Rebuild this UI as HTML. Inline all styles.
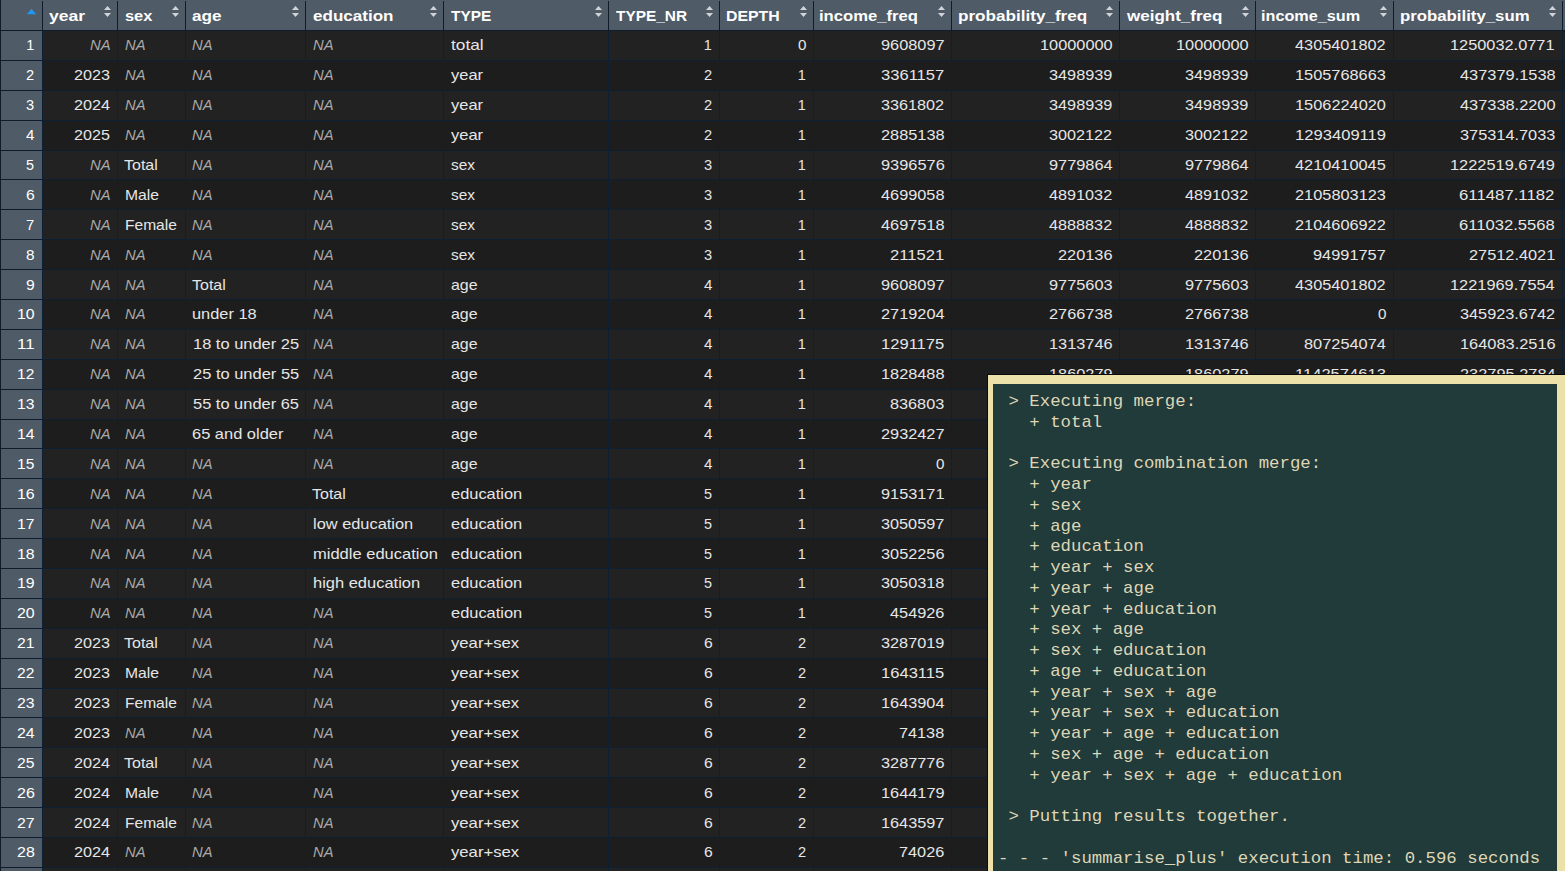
<!DOCTYPE html>
<html><head><meta charset="utf-8"><style>
html,body{margin:0;padding:0;}
body{width:1565px;height:871px;overflow:hidden;position:relative;background:#1d1d1d;font-family:"Liberation Sans",sans-serif;}
div,svg,span.t{position:absolute;}
span.t{transform-origin:0 50%;font-size:14.5px;line-height:20px;height:20px;white-space:pre;}
#ov{left:987px;top:374px;width:578px;height:497px;background:#0b0b0e;}
#fr{left:988px;top:375px;width:577px;height:496px;background:#ebe1a9;}
#in{left:993px;top:384px;width:564px;height:487px;background:#213a3a;}
#con{position:absolute;left:998px;top:392px;margin:0;font-family:"Liberation Mono",monospace;font-size:17.39px;line-height:20.75px;color:#ded6b6;white-space:pre;}
</style></head><body>
<div style="left:0px;top:0px;width:1565px;height:30px;background:#4f5b66;"></div><div style="left:0px;top:30px;width:1565px;height:1px;background:#0e1c2b;"></div><div style="left:0px;top:31px;width:42px;height:29px;background:#4f5b66;"></div><div style="left:43px;top:31px;width:1522px;height:29px;background:#222222;"></div><div style="left:0px;top:60px;width:42px;height:1px;background:#0e1c2b;"></div><div style="left:42px;top:60px;width:1523px;height:1px;background:#0c1f33;"></div><div style="left:0px;top:61px;width:42px;height:29px;background:#4f5b66;"></div><div style="left:43px;top:61px;width:1522px;height:29px;background:#1d1d1d;"></div><div style="left:0px;top:90px;width:42px;height:1px;background:#0e1c2b;"></div><div style="left:42px;top:90px;width:1523px;height:1px;background:#0c1f33;"></div><div style="left:0px;top:91px;width:42px;height:29px;background:#4f5b66;"></div><div style="left:43px;top:91px;width:1522px;height:29px;background:#222222;"></div><div style="left:0px;top:120px;width:42px;height:1px;background:#0e1c2b;"></div><div style="left:42px;top:120px;width:1523px;height:1px;background:#0c1f33;"></div><div style="left:0px;top:121px;width:42px;height:29px;background:#4f5b66;"></div><div style="left:43px;top:121px;width:1522px;height:29px;background:#1d1d1d;"></div><div style="left:0px;top:150px;width:42px;height:1px;background:#0e1c2b;"></div><div style="left:42px;top:150px;width:1523px;height:1px;background:#0c1f33;"></div><div style="left:0px;top:151px;width:42px;height:28px;background:#4f5b66;"></div><div style="left:43px;top:151px;width:1522px;height:28px;background:#222222;"></div><div style="left:0px;top:179px;width:42px;height:1px;background:#0e1c2b;"></div><div style="left:42px;top:179px;width:1523px;height:1px;background:#0c1f33;"></div><div style="left:0px;top:180px;width:42px;height:29px;background:#4f5b66;"></div><div style="left:43px;top:180px;width:1522px;height:29px;background:#1d1d1d;"></div><div style="left:0px;top:209px;width:42px;height:1px;background:#0e1c2b;"></div><div style="left:42px;top:209px;width:1523px;height:1px;background:#0c1f33;"></div><div style="left:0px;top:210px;width:42px;height:29px;background:#4f5b66;"></div><div style="left:43px;top:210px;width:1522px;height:29px;background:#222222;"></div><div style="left:0px;top:239px;width:42px;height:1px;background:#0e1c2b;"></div><div style="left:42px;top:239px;width:1523px;height:1px;background:#0c1f33;"></div><div style="left:0px;top:240px;width:42px;height:29px;background:#4f5b66;"></div><div style="left:43px;top:240px;width:1522px;height:29px;background:#1d1d1d;"></div><div style="left:0px;top:269px;width:42px;height:1px;background:#0e1c2b;"></div><div style="left:42px;top:269px;width:1523px;height:1px;background:#0c1f33;"></div><div style="left:0px;top:270px;width:42px;height:29px;background:#4f5b66;"></div><div style="left:43px;top:270px;width:1522px;height:29px;background:#222222;"></div><div style="left:0px;top:299px;width:42px;height:1px;background:#0e1c2b;"></div><div style="left:42px;top:299px;width:1523px;height:1px;background:#0c1f33;"></div><div style="left:0px;top:300px;width:42px;height:29px;background:#4f5b66;"></div><div style="left:43px;top:300px;width:1522px;height:29px;background:#1d1d1d;"></div><div style="left:0px;top:329px;width:42px;height:1px;background:#0e1c2b;"></div><div style="left:42px;top:329px;width:1523px;height:1px;background:#0c1f33;"></div><div style="left:0px;top:330px;width:42px;height:29px;background:#4f5b66;"></div><div style="left:43px;top:330px;width:1522px;height:29px;background:#222222;"></div><div style="left:0px;top:359px;width:42px;height:1px;background:#0e1c2b;"></div><div style="left:42px;top:359px;width:1523px;height:1px;background:#0c1f33;"></div><div style="left:0px;top:360px;width:42px;height:29px;background:#4f5b66;"></div><div style="left:43px;top:360px;width:1522px;height:29px;background:#1d1d1d;"></div><div style="left:0px;top:389px;width:42px;height:1px;background:#0e1c2b;"></div><div style="left:42px;top:389px;width:1523px;height:1px;background:#0c1f33;"></div><div style="left:0px;top:390px;width:42px;height:29px;background:#4f5b66;"></div><div style="left:43px;top:390px;width:1522px;height:29px;background:#222222;"></div><div style="left:0px;top:419px;width:42px;height:1px;background:#0e1c2b;"></div><div style="left:42px;top:419px;width:1523px;height:1px;background:#0c1f33;"></div><div style="left:0px;top:420px;width:42px;height:28px;background:#4f5b66;"></div><div style="left:43px;top:420px;width:1522px;height:28px;background:#1d1d1d;"></div><div style="left:0px;top:448px;width:42px;height:1px;background:#0e1c2b;"></div><div style="left:42px;top:448px;width:1523px;height:1px;background:#0c1f33;"></div><div style="left:0px;top:449px;width:42px;height:29px;background:#4f5b66;"></div><div style="left:43px;top:449px;width:1522px;height:29px;background:#222222;"></div><div style="left:0px;top:478px;width:42px;height:1px;background:#0e1c2b;"></div><div style="left:42px;top:478px;width:1523px;height:1px;background:#0c1f33;"></div><div style="left:0px;top:479px;width:42px;height:29px;background:#4f5b66;"></div><div style="left:43px;top:479px;width:1522px;height:29px;background:#1d1d1d;"></div><div style="left:0px;top:508px;width:42px;height:1px;background:#0e1c2b;"></div><div style="left:42px;top:508px;width:1523px;height:1px;background:#0c1f33;"></div><div style="left:0px;top:509px;width:42px;height:29px;background:#4f5b66;"></div><div style="left:43px;top:509px;width:1522px;height:29px;background:#222222;"></div><div style="left:0px;top:538px;width:42px;height:1px;background:#0e1c2b;"></div><div style="left:42px;top:538px;width:1523px;height:1px;background:#0c1f33;"></div><div style="left:0px;top:539px;width:42px;height:29px;background:#4f5b66;"></div><div style="left:43px;top:539px;width:1522px;height:29px;background:#1d1d1d;"></div><div style="left:0px;top:568px;width:42px;height:1px;background:#0e1c2b;"></div><div style="left:42px;top:568px;width:1523px;height:1px;background:#0c1f33;"></div><div style="left:0px;top:569px;width:42px;height:29px;background:#4f5b66;"></div><div style="left:43px;top:569px;width:1522px;height:29px;background:#222222;"></div><div style="left:0px;top:598px;width:42px;height:1px;background:#0e1c2b;"></div><div style="left:42px;top:598px;width:1523px;height:1px;background:#0c1f33;"></div><div style="left:0px;top:599px;width:42px;height:29px;background:#4f5b66;"></div><div style="left:43px;top:599px;width:1522px;height:29px;background:#1d1d1d;"></div><div style="left:0px;top:628px;width:42px;height:1px;background:#0e1c2b;"></div><div style="left:42px;top:628px;width:1523px;height:1px;background:#0c1f33;"></div><div style="left:0px;top:629px;width:42px;height:29px;background:#4f5b66;"></div><div style="left:43px;top:629px;width:1522px;height:29px;background:#222222;"></div><div style="left:0px;top:658px;width:42px;height:1px;background:#0e1c2b;"></div><div style="left:42px;top:658px;width:1523px;height:1px;background:#0c1f33;"></div><div style="left:0px;top:659px;width:42px;height:29px;background:#4f5b66;"></div><div style="left:43px;top:659px;width:1522px;height:29px;background:#1d1d1d;"></div><div style="left:0px;top:688px;width:42px;height:1px;background:#0e1c2b;"></div><div style="left:42px;top:688px;width:1523px;height:1px;background:#0c1f33;"></div><div style="left:0px;top:689px;width:42px;height:28px;background:#4f5b66;"></div><div style="left:43px;top:689px;width:1522px;height:28px;background:#222222;"></div><div style="left:0px;top:717px;width:42px;height:1px;background:#0e1c2b;"></div><div style="left:42px;top:717px;width:1523px;height:1px;background:#0c1f33;"></div><div style="left:0px;top:718px;width:42px;height:29px;background:#4f5b66;"></div><div style="left:43px;top:718px;width:1522px;height:29px;background:#1d1d1d;"></div><div style="left:0px;top:747px;width:42px;height:1px;background:#0e1c2b;"></div><div style="left:42px;top:747px;width:1523px;height:1px;background:#0c1f33;"></div><div style="left:0px;top:748px;width:42px;height:29px;background:#4f5b66;"></div><div style="left:43px;top:748px;width:1522px;height:29px;background:#222222;"></div><div style="left:0px;top:777px;width:42px;height:1px;background:#0e1c2b;"></div><div style="left:42px;top:777px;width:1523px;height:1px;background:#0c1f33;"></div><div style="left:0px;top:778px;width:42px;height:29px;background:#4f5b66;"></div><div style="left:43px;top:778px;width:1522px;height:29px;background:#1d1d1d;"></div><div style="left:0px;top:807px;width:42px;height:1px;background:#0e1c2b;"></div><div style="left:42px;top:807px;width:1523px;height:1px;background:#0c1f33;"></div><div style="left:0px;top:808px;width:42px;height:29px;background:#4f5b66;"></div><div style="left:43px;top:808px;width:1522px;height:29px;background:#222222;"></div><div style="left:0px;top:837px;width:42px;height:1px;background:#0e1c2b;"></div><div style="left:42px;top:837px;width:1523px;height:1px;background:#0c1f33;"></div><div style="left:0px;top:838px;width:42px;height:29px;background:#4f5b66;"></div><div style="left:43px;top:838px;width:1522px;height:29px;background:#1d1d1d;"></div><div style="left:0px;top:867px;width:42px;height:1px;background:#0e1c2b;"></div><div style="left:42px;top:867px;width:1523px;height:1px;background:#0c1f33;"></div><div style="left:0px;top:868px;width:42px;height:29px;background:#4f5b66;"></div><div style="left:43px;top:868px;width:1522px;height:29px;background:#222222;"></div><div style="left:0px;top:897px;width:42px;height:1px;background:#0e1c2b;"></div><div style="left:42px;top:897px;width:1523px;height:1px;background:#0c1f33;"></div><div style="left:0px;top:0px;width:1px;height:871px;background:#0e1c2b;"></div><div style="left:42px;top:1px;width:1px;height:29px;background:#0e1c2b;"></div><div style="left:42px;top:31px;width:1px;height:840px;background:#0c1f33;"></div><div style="left:117px;top:1px;width:1px;height:29px;background:#0e1c2b;"></div><div style="left:117px;top:31px;width:1px;height:840px;background:#0c1f33;"></div><div style="left:185px;top:1px;width:1px;height:29px;background:#0e1c2b;"></div><div style="left:185px;top:31px;width:1px;height:840px;background:#0c1f33;"></div><div style="left:305px;top:1px;width:1px;height:29px;background:#0e1c2b;"></div><div style="left:305px;top:31px;width:1px;height:840px;background:#0c1f33;"></div><div style="left:443px;top:1px;width:1px;height:29px;background:#0e1c2b;"></div><div style="left:443px;top:31px;width:1px;height:840px;background:#0c1f33;"></div><div style="left:608px;top:1px;width:1px;height:29px;background:#0e1c2b;"></div><div style="left:608px;top:31px;width:1px;height:840px;background:#0c1f33;"></div><div style="left:719px;top:1px;width:1px;height:29px;background:#0e1c2b;"></div><div style="left:719px;top:31px;width:1px;height:840px;background:#0c1f33;"></div><div style="left:813px;top:1px;width:1px;height:29px;background:#0e1c2b;"></div><div style="left:813px;top:31px;width:1px;height:840px;background:#0c1f33;"></div><div style="left:951px;top:1px;width:1px;height:29px;background:#0e1c2b;"></div><div style="left:951px;top:31px;width:1px;height:840px;background:#0c1f33;"></div><div style="left:1119px;top:1px;width:1px;height:29px;background:#0e1c2b;"></div><div style="left:1119px;top:31px;width:1px;height:840px;background:#0c1f33;"></div><div style="left:1255px;top:1px;width:1px;height:29px;background:#0e1c2b;"></div><div style="left:1255px;top:31px;width:1px;height:840px;background:#0c1f33;"></div><div style="left:1393px;top:1px;width:1px;height:29px;background:#0e1c2b;"></div><div style="left:1393px;top:31px;width:1px;height:840px;background:#0c1f33;"></div><div style="left:1562px;top:1px;width:1px;height:29px;background:#0e1c2b;"></div><div style="left:1562px;top:31px;width:1px;height:840px;background:#0c1f33;"></div><span class="t" style="left:49.03px;top:6px;transform:scaleX(1.2123);color:#ffffff;font-weight:bold;font-style:normal">year</span><svg class="a" style="left:104px;top:5px" width="8" height="13" viewBox="0 0 8 13"><path d="M0 5 L3.5 1 L7 5Z M0 8 L7 8 L3.5 12Z" fill="#d0d4d8"/></svg><span class="t" style="left:124.97px;top:6px;transform:scaleX(1.1312);color:#ffffff;font-weight:bold;font-style:normal">sex</span><svg class="a" style="left:172px;top:5px" width="8" height="13" viewBox="0 0 8 13"><path d="M0 5 L3.5 1 L7 5Z M0 8 L7 8 L3.5 12Z" fill="#d0d4d8"/></svg><span class="t" style="left:192.42px;top:6px;transform:scaleX(1.1833);color:#ffffff;font-weight:bold;font-style:normal">age</span><svg class="a" style="left:292px;top:5px" width="8" height="13" viewBox="0 0 8 13"><path d="M0 5 L3.5 1 L7 5Z M0 8 L7 8 L3.5 12Z" fill="#d0d4d8"/></svg><span class="t" style="left:312.75px;top:6px;transform:scaleX(1.1757);color:#ffffff;font-weight:bold;font-style:normal">education</span><svg class="a" style="left:430px;top:5px" width="8" height="13" viewBox="0 0 8 13"><path d="M0 5 L3.5 1 L7 5Z M0 8 L7 8 L3.5 12Z" fill="#d0d4d8"/></svg><span class="t" style="left:451.00px;top:6px;transform:scaleX(1.0637);color:#ffffff;font-weight:bold;font-style:normal">TYPE</span><svg class="a" style="left:595px;top:5px" width="8" height="13" viewBox="0 0 8 13"><path d="M0 5 L3.5 1 L7 5Z M0 8 L7 8 L3.5 12Z" fill="#d0d4d8"/></svg><span class="t" style="left:616.20px;top:6px;transform:scaleX(1.0634);color:#ffffff;font-weight:bold;font-style:normal">TYPE_NR</span><svg class="a" style="left:706px;top:5px" width="8" height="13" viewBox="0 0 8 13"><path d="M0 5 L3.5 1 L7 5Z M0 8 L7 8 L3.5 12Z" fill="#d0d4d8"/></svg><span class="t" style="left:726.06px;top:6px;transform:scaleX(1.0926);color:#ffffff;font-weight:bold;font-style:normal">DEPTH</span><svg class="a" style="left:800px;top:5px" width="8" height="13" viewBox="0 0 8 13"><path d="M0 5 L3.5 1 L7 5Z M0 8 L7 8 L3.5 12Z" fill="#d0d4d8"/></svg><span class="t" style="left:819.35px;top:6px;transform:scaleX(1.1470);color:#ffffff;font-weight:bold;font-style:normal">income_freq</span><svg class="a" style="left:938px;top:5px" width="8" height="13" viewBox="0 0 8 13"><path d="M0 5 L3.5 1 L7 5Z M0 8 L7 8 L3.5 12Z" fill="#d0d4d8"/></svg><span class="t" style="left:957.88px;top:6px;transform:scaleX(1.1792);color:#ffffff;font-weight:bold;font-style:normal">probability_freq</span><svg class="a" style="left:1106px;top:5px" width="8" height="13" viewBox="0 0 8 13"><path d="M0 5 L3.5 1 L7 5Z M0 8 L7 8 L3.5 12Z" fill="#d0d4d8"/></svg><span class="t" style="left:1126.86px;top:6px;transform:scaleX(1.1732);color:#ffffff;font-weight:bold;font-style:normal">weight_freq</span><svg class="a" style="left:1242px;top:5px" width="8" height="13" viewBox="0 0 8 13"><path d="M0 5 L3.5 1 L7 5Z M0 8 L7 8 L3.5 12Z" fill="#d0d4d8"/></svg><span class="t" style="left:1261.37px;top:6px;transform:scaleX(1.1193);color:#ffffff;font-weight:bold;font-style:normal">income_sum</span><svg class="a" style="left:1380px;top:5px" width="8" height="13" viewBox="0 0 8 13"><path d="M0 5 L3.5 1 L7 5Z M0 8 L7 8 L3.5 12Z" fill="#d0d4d8"/></svg><span class="t" style="left:1400.30px;top:6px;transform:scaleX(1.1567);color:#ffffff;font-weight:bold;font-style:normal">probability_sum</span><svg class="a" style="left:1549px;top:5px" width="8" height="13" viewBox="0 0 8 13"><path d="M0 5 L3.5 1 L7 5Z M0 8 L7 8 L3.5 12Z" fill="#d0d4d8"/></svg><svg class="a" style="left:26px;top:8px" width="11" height="7" viewBox="0 0 11 7"><path d="M0.8 6.2 L5.5 0.8 L10.2 6.2Z" fill="#2196f3"/></svg><span class="t" style="left:26.32px;top:35px;transform:scaleX(1.0000);color:#ffffff;font-weight:normal;font-style:normal">1</span><span class="t" style="left:89.81px;top:35px;transform:scaleX(1.0175);color:#a9a9a9;font-weight:normal;font-style:italic">NA</span><span class="t" style="left:124.73px;top:35px;transform:scaleX(1.0175);color:#a9a9a9;font-weight:normal;font-style:italic">NA</span><span class="t" style="left:192.23px;top:35px;transform:scaleX(1.0175);color:#a9a9a9;font-weight:normal;font-style:italic">NA</span><span class="t" style="left:312.73px;top:35px;transform:scaleX(1.0175);color:#a9a9a9;font-weight:normal;font-style:italic">NA</span><span class="t" style="left:451.23px;top:35px;transform:scaleX(1.1897);color:#e6e6e6;font-weight:normal;font-style:normal">total</span><span class="t" style="left:703.82px;top:35px;transform:scaleX(1.0000);color:#e6e6e6;font-weight:normal;font-style:normal">1</span><span class="t" style="left:797.70px;top:35px;transform:scaleX(1.0471);color:#e6e6e6;font-weight:normal;font-style:normal">0</span><span class="t" style="left:880.51px;top:35px;transform:scaleX(1.1263);color:#e6e6e6;font-weight:normal;font-style:normal">9608097</span><span class="t" style="left:1039.55px;top:35px;transform:scaleX(1.1260);color:#e6e6e6;font-weight:normal;font-style:normal">10000000</span><span class="t" style="left:1175.55px;top:35px;transform:scaleX(1.1260);color:#e6e6e6;font-weight:normal;font-style:normal">10000000</span><span class="t" style="left:1295.21px;top:35px;transform:scaleX(1.1243);color:#e6e6e6;font-weight:normal;font-style:normal">4305401802</span><span class="t" style="left:1450.49px;top:35px;transform:scaleX(1.1268);color:#e6e6e6;font-weight:normal;font-style:normal">1250032.0771</span><span class="t" style="left:26.16px;top:65px;transform:scaleX(1.0083);color:#ffffff;font-weight:normal;font-style:normal">2</span><span class="t" style="left:74.10px;top:65px;transform:scaleX(1.1153);color:#e6e6e6;font-weight:normal;font-style:normal">2023</span><span class="t" style="left:124.73px;top:65px;transform:scaleX(1.0175);color:#a9a9a9;font-weight:normal;font-style:italic">NA</span><span class="t" style="left:192.23px;top:65px;transform:scaleX(1.0175);color:#a9a9a9;font-weight:normal;font-style:italic">NA</span><span class="t" style="left:312.73px;top:65px;transform:scaleX(1.0175);color:#a9a9a9;font-weight:normal;font-style:italic">NA</span><span class="t" style="left:451.48px;top:65px;transform:scaleX(1.1355);color:#e6e6e6;font-weight:normal;font-style:normal">year</span><span class="t" style="left:703.66px;top:65px;transform:scaleX(1.0083);color:#e6e6e6;font-weight:normal;font-style:normal">2</span><span class="t" style="left:797.82px;top:65px;transform:scaleX(1.0000);color:#e6e6e6;font-weight:normal;font-style:normal">1</span><span class="t" style="left:880.83px;top:65px;transform:scaleX(1.1424);color:#e6e6e6;font-weight:normal;font-style:normal">3361157</span><span class="t" style="left:1048.84px;top:65px;transform:scaleX(1.1232);color:#e6e6e6;font-weight:normal;font-style:normal">3498939</span><span class="t" style="left:1184.84px;top:65px;transform:scaleX(1.1232);color:#e6e6e6;font-weight:normal;font-style:normal">3498939</span><span class="t" style="left:1295.22px;top:65px;transform:scaleX(1.1265);color:#e6e6e6;font-weight:normal;font-style:normal">1505768663</span><span class="t" style="left:1459.63px;top:65px;transform:scaleX(1.1290);color:#e6e6e6;font-weight:normal;font-style:normal">437379.1538</span><span class="t" style="left:26.38px;top:95px;transform:scaleX(1.0057);color:#ffffff;font-weight:normal;font-style:normal">3</span><span class="t" style="left:74.09px;top:95px;transform:scaleX(1.1186);color:#e6e6e6;font-weight:normal;font-style:normal">2024</span><span class="t" style="left:124.73px;top:95px;transform:scaleX(1.0175);color:#a9a9a9;font-weight:normal;font-style:italic">NA</span><span class="t" style="left:192.23px;top:95px;transform:scaleX(1.0175);color:#a9a9a9;font-weight:normal;font-style:italic">NA</span><span class="t" style="left:312.73px;top:95px;transform:scaleX(1.0175);color:#a9a9a9;font-weight:normal;font-style:italic">NA</span><span class="t" style="left:451.48px;top:95px;transform:scaleX(1.1355);color:#e6e6e6;font-weight:normal;font-style:normal">year</span><span class="t" style="left:703.66px;top:95px;transform:scaleX(1.0083);color:#e6e6e6;font-weight:normal;font-style:normal">2</span><span class="t" style="left:797.82px;top:95px;transform:scaleX(1.0000);color:#e6e6e6;font-weight:normal;font-style:normal">1</span><span class="t" style="left:880.85px;top:95px;transform:scaleX(1.1163);color:#e6e6e6;font-weight:normal;font-style:normal">3361802</span><span class="t" style="left:1048.84px;top:95px;transform:scaleX(1.1232);color:#e6e6e6;font-weight:normal;font-style:normal">3498939</span><span class="t" style="left:1184.84px;top:95px;transform:scaleX(1.1232);color:#e6e6e6;font-weight:normal;font-style:normal">3498939</span><span class="t" style="left:1295.22px;top:95px;transform:scaleX(1.1280);color:#e6e6e6;font-weight:normal;font-style:normal">1506224020</span><span class="t" style="left:1459.63px;top:95px;transform:scaleX(1.1286);color:#e6e6e6;font-weight:normal;font-style:normal">437338.2200</span><span class="t" style="left:26.19px;top:125px;transform:scaleX(1.0463);color:#ffffff;font-weight:normal;font-style:normal">4</span><span class="t" style="left:74.10px;top:125px;transform:scaleX(1.1110);color:#e6e6e6;font-weight:normal;font-style:normal">2025</span><span class="t" style="left:124.73px;top:125px;transform:scaleX(1.0175);color:#a9a9a9;font-weight:normal;font-style:italic">NA</span><span class="t" style="left:192.23px;top:125px;transform:scaleX(1.0175);color:#a9a9a9;font-weight:normal;font-style:italic">NA</span><span class="t" style="left:312.73px;top:125px;transform:scaleX(1.0175);color:#a9a9a9;font-weight:normal;font-style:italic">NA</span><span class="t" style="left:451.48px;top:125px;transform:scaleX(1.1355);color:#e6e6e6;font-weight:normal;font-style:normal">year</span><span class="t" style="left:703.66px;top:125px;transform:scaleX(1.0083);color:#e6e6e6;font-weight:normal;font-style:normal">2</span><span class="t" style="left:797.82px;top:125px;transform:scaleX(1.0000);color:#e6e6e6;font-weight:normal;font-style:normal">1</span><span class="t" style="left:880.60px;top:125px;transform:scaleX(1.1269);color:#e6e6e6;font-weight:normal;font-style:normal">2885138</span><span class="t" style="left:1048.85px;top:125px;transform:scaleX(1.1163);color:#e6e6e6;font-weight:normal;font-style:normal">3002122</span><span class="t" style="left:1184.85px;top:125px;transform:scaleX(1.1163);color:#e6e6e6;font-weight:normal;font-style:normal">3002122</span><span class="t" style="left:1295.20px;top:125px;transform:scaleX(1.1445);color:#e6e6e6;font-weight:normal;font-style:normal">1293409119</span><span class="t" style="left:1459.78px;top:125px;transform:scaleX(1.1254);color:#e6e6e6;font-weight:normal;font-style:normal">375314.7033</span><span class="t" style="left:26.37px;top:155px;transform:scaleX(0.9889);color:#ffffff;font-weight:normal;font-style:normal">5</span><span class="t" style="left:89.81px;top:155px;transform:scaleX(1.0175);color:#a9a9a9;font-weight:normal;font-style:italic">NA</span><span class="t" style="left:124.41px;top:155px;transform:scaleX(1.1021);color:#e6e6e6;font-weight:normal;font-style:normal">Total</span><span class="t" style="left:192.23px;top:155px;transform:scaleX(1.0175);color:#a9a9a9;font-weight:normal;font-style:italic">NA</span><span class="t" style="left:312.73px;top:155px;transform:scaleX(1.0175);color:#a9a9a9;font-weight:normal;font-style:italic">NA</span><span class="t" style="left:451.45px;top:155px;transform:scaleX(1.0632);color:#e6e6e6;font-weight:normal;font-style:normal">sex</span><span class="t" style="left:703.88px;top:155px;transform:scaleX(1.0057);color:#e6e6e6;font-weight:normal;font-style:normal">3</span><span class="t" style="left:797.82px;top:155px;transform:scaleX(1.0000);color:#e6e6e6;font-weight:normal;font-style:normal">1</span><span class="t" style="left:880.50px;top:155px;transform:scaleX(1.1302);color:#e6e6e6;font-weight:normal;font-style:normal">9396576</span><span class="t" style="left:1048.51px;top:155px;transform:scaleX(1.1276);color:#e6e6e6;font-weight:normal;font-style:normal">9779864</span><span class="t" style="left:1184.51px;top:155px;transform:scaleX(1.1276);color:#e6e6e6;font-weight:normal;font-style:normal">9779864</span><span class="t" style="left:1295.21px;top:155px;transform:scaleX(1.1250);color:#e6e6e6;font-weight:normal;font-style:normal">4210410045</span><span class="t" style="left:1450.48px;top:155px;transform:scaleX(1.1299);color:#e6e6e6;font-weight:normal;font-style:normal">1222519.6749</span><span class="t" style="left:26.04px;top:185px;transform:scaleX(1.0836);color:#ffffff;font-weight:normal;font-style:normal">6</span><span class="t" style="left:89.81px;top:185px;transform:scaleX(1.0175);color:#a9a9a9;font-weight:normal;font-style:italic">NA</span><span class="t" style="left:124.93px;top:185px;transform:scaleX(1.0787);color:#e6e6e6;font-weight:normal;font-style:normal">Male</span><span class="t" style="left:192.23px;top:185px;transform:scaleX(1.0175);color:#a9a9a9;font-weight:normal;font-style:italic">NA</span><span class="t" style="left:312.73px;top:185px;transform:scaleX(1.0175);color:#a9a9a9;font-weight:normal;font-style:italic">NA</span><span class="t" style="left:451.45px;top:185px;transform:scaleX(1.0632);color:#e6e6e6;font-weight:normal;font-style:normal">sex</span><span class="t" style="left:703.88px;top:185px;transform:scaleX(1.0057);color:#e6e6e6;font-weight:normal;font-style:normal">3</span><span class="t" style="left:797.82px;top:185px;transform:scaleX(1.0000);color:#e6e6e6;font-weight:normal;font-style:normal">1</span><span class="t" style="left:880.70px;top:185px;transform:scaleX(1.1252);color:#e6e6e6;font-weight:normal;font-style:normal">4699058</span><span class="t" style="left:1048.70px;top:185px;transform:scaleX(1.1189);color:#e6e6e6;font-weight:normal;font-style:normal">4891032</span><span class="t" style="left:1184.70px;top:185px;transform:scaleX(1.1189);color:#e6e6e6;font-weight:normal;font-style:normal">4891032</span><span class="t" style="left:1295.12px;top:185px;transform:scaleX(1.1279);color:#e6e6e6;font-weight:normal;font-style:normal">2105803123</span><span class="t" style="left:1459.46px;top:185px;transform:scaleX(1.1565);color:#e6e6e6;font-weight:normal;font-style:normal">611487.1182</span><span class="t" style="left:26.26px;top:215px;transform:scaleX(1.0237);color:#ffffff;font-weight:normal;font-style:normal">7</span><span class="t" style="left:89.81px;top:215px;transform:scaleX(1.0175);color:#a9a9a9;font-weight:normal;font-style:italic">NA</span><span class="t" style="left:124.94px;top:215px;transform:scaleX(1.0727);color:#e6e6e6;font-weight:normal;font-style:normal">Female</span><span class="t" style="left:192.23px;top:215px;transform:scaleX(1.0175);color:#a9a9a9;font-weight:normal;font-style:italic">NA</span><span class="t" style="left:312.73px;top:215px;transform:scaleX(1.0175);color:#a9a9a9;font-weight:normal;font-style:italic">NA</span><span class="t" style="left:451.45px;top:215px;transform:scaleX(1.0632);color:#e6e6e6;font-weight:normal;font-style:normal">sex</span><span class="t" style="left:703.88px;top:215px;transform:scaleX(1.0057);color:#e6e6e6;font-weight:normal;font-style:normal">3</span><span class="t" style="left:797.82px;top:215px;transform:scaleX(1.0000);color:#e6e6e6;font-weight:normal;font-style:normal">1</span><span class="t" style="left:880.70px;top:215px;transform:scaleX(1.1252);color:#e6e6e6;font-weight:normal;font-style:normal">4697518</span><span class="t" style="left:1048.70px;top:215px;transform:scaleX(1.1189);color:#e6e6e6;font-weight:normal;font-style:normal">4888832</span><span class="t" style="left:1184.70px;top:215px;transform:scaleX(1.1189);color:#e6e6e6;font-weight:normal;font-style:normal">4888832</span><span class="t" style="left:1295.12px;top:215px;transform:scaleX(1.1255);color:#e6e6e6;font-weight:normal;font-style:normal">2104606922</span><span class="t" style="left:1459.47px;top:215px;transform:scaleX(1.1456);color:#e6e6e6;font-weight:normal;font-style:normal">611032.5568</span><span class="t" style="left:26.16px;top:245px;transform:scaleX(1.0565);color:#ffffff;font-weight:normal;font-style:normal">8</span><span class="t" style="left:89.81px;top:245px;transform:scaleX(1.0175);color:#a9a9a9;font-weight:normal;font-style:italic">NA</span><span class="t" style="left:124.73px;top:245px;transform:scaleX(1.0175);color:#a9a9a9;font-weight:normal;font-style:italic">NA</span><span class="t" style="left:192.23px;top:245px;transform:scaleX(1.0175);color:#a9a9a9;font-weight:normal;font-style:italic">NA</span><span class="t" style="left:312.73px;top:245px;transform:scaleX(1.0175);color:#a9a9a9;font-weight:normal;font-style:italic">NA</span><span class="t" style="left:451.45px;top:245px;transform:scaleX(1.0632);color:#e6e6e6;font-weight:normal;font-style:normal">sex</span><span class="t" style="left:703.88px;top:245px;transform:scaleX(1.0057);color:#e6e6e6;font-weight:normal;font-style:normal">3</span><span class="t" style="left:797.82px;top:245px;transform:scaleX(1.0000);color:#e6e6e6;font-weight:normal;font-style:normal">1</span><span class="t" style="left:889.75px;top:245px;transform:scaleX(1.1463);color:#e6e6e6;font-weight:normal;font-style:normal">211521</span><span class="t" style="left:1057.76px;top:245px;transform:scaleX(1.1272);color:#e6e6e6;font-weight:normal;font-style:normal">220136</span><span class="t" style="left:1193.76px;top:245px;transform:scaleX(1.1272);color:#e6e6e6;font-weight:normal;font-style:normal">220136</span><span class="t" style="left:1313.34px;top:245px;transform:scaleX(1.1277);color:#e6e6e6;font-weight:normal;font-style:normal">94991757</span><span class="t" style="left:1468.70px;top:245px;transform:scaleX(1.1262);color:#e6e6e6;font-weight:normal;font-style:normal">27512.4021</span><span class="t" style="left:26.01px;top:275px;transform:scaleX(1.0812);color:#ffffff;font-weight:normal;font-style:normal">9</span><span class="t" style="left:89.81px;top:275px;transform:scaleX(1.0175);color:#a9a9a9;font-weight:normal;font-style:italic">NA</span><span class="t" style="left:124.73px;top:275px;transform:scaleX(1.0175);color:#a9a9a9;font-weight:normal;font-style:italic">NA</span><span class="t" style="left:191.91px;top:275px;transform:scaleX(1.1021);color:#e6e6e6;font-weight:normal;font-style:normal">Total</span><span class="t" style="left:312.73px;top:275px;transform:scaleX(1.0175);color:#a9a9a9;font-weight:normal;font-style:italic">NA</span><span class="t" style="left:451.29px;top:275px;transform:scaleX(1.0986);color:#e6e6e6;font-weight:normal;font-style:normal">age</span><span class="t" style="left:703.69px;top:275px;transform:scaleX(1.0463);color:#e6e6e6;font-weight:normal;font-style:normal">4</span><span class="t" style="left:797.82px;top:275px;transform:scaleX(1.0000);color:#e6e6e6;font-weight:normal;font-style:normal">1</span><span class="t" style="left:880.51px;top:275px;transform:scaleX(1.1263);color:#e6e6e6;font-weight:normal;font-style:normal">9608097</span><span class="t" style="left:1048.51px;top:275px;transform:scaleX(1.1258);color:#e6e6e6;font-weight:normal;font-style:normal">9775603</span><span class="t" style="left:1184.51px;top:275px;transform:scaleX(1.1258);color:#e6e6e6;font-weight:normal;font-style:normal">9775603</span><span class="t" style="left:1295.21px;top:275px;transform:scaleX(1.1243);color:#e6e6e6;font-weight:normal;font-style:normal">4305401802</span><span class="t" style="left:1450.48px;top:275px;transform:scaleX(1.1289);color:#e6e6e6;font-weight:normal;font-style:normal">1221969.7554</span><span class="t" style="left:17.06px;top:304px;transform:scaleX(1.0917);color:#ffffff;font-weight:normal;font-style:normal">10</span><span class="t" style="left:89.81px;top:304px;transform:scaleX(1.0175);color:#a9a9a9;font-weight:normal;font-style:italic">NA</span><span class="t" style="left:124.73px;top:304px;transform:scaleX(1.0175);color:#a9a9a9;font-weight:normal;font-style:italic">NA</span><span class="t" style="left:192.46px;top:304px;transform:scaleX(1.1291);color:#e6e6e6;font-weight:normal;font-style:normal">under 18</span><span class="t" style="left:312.73px;top:304px;transform:scaleX(1.0175);color:#a9a9a9;font-weight:normal;font-style:italic">NA</span><span class="t" style="left:451.29px;top:304px;transform:scaleX(1.0986);color:#e6e6e6;font-weight:normal;font-style:normal">age</span><span class="t" style="left:703.69px;top:304px;transform:scaleX(1.0463);color:#e6e6e6;font-weight:normal;font-style:normal">4</span><span class="t" style="left:797.82px;top:304px;transform:scaleX(1.0000);color:#e6e6e6;font-weight:normal;font-style:normal">1</span><span class="t" style="left:880.60px;top:304px;transform:scaleX(1.1259);color:#e6e6e6;font-weight:normal;font-style:normal">2719204</span><span class="t" style="left:1048.60px;top:304px;transform:scaleX(1.1269);color:#e6e6e6;font-weight:normal;font-style:normal">2766738</span><span class="t" style="left:1184.60px;top:304px;transform:scaleX(1.1269);color:#e6e6e6;font-weight:normal;font-style:normal">2766738</span><span class="t" style="left:1377.70px;top:304px;transform:scaleX(1.0471);color:#e6e6e6;font-weight:normal;font-style:normal">0</span><span class="t" style="left:1459.78px;top:304px;transform:scaleX(1.1231);color:#e6e6e6;font-weight:normal;font-style:normal">345923.6742</span><span class="t" style="left:16.98px;top:334px;transform:scaleX(1.1639);color:#ffffff;font-weight:normal;font-style:normal">11</span><span class="t" style="left:89.81px;top:334px;transform:scaleX(1.0175);color:#a9a9a9;font-weight:normal;font-style:italic">NA</span><span class="t" style="left:124.73px;top:334px;transform:scaleX(1.0175);color:#a9a9a9;font-weight:normal;font-style:italic">NA</span><span class="t" style="left:192.63px;top:334px;transform:scaleX(1.1346);color:#e6e6e6;font-weight:normal;font-style:normal">18 to under 25</span><span class="t" style="left:312.73px;top:334px;transform:scaleX(1.0175);color:#a9a9a9;font-weight:normal;font-style:italic">NA</span><span class="t" style="left:451.29px;top:334px;transform:scaleX(1.0986);color:#e6e6e6;font-weight:normal;font-style:normal">age</span><span class="t" style="left:703.69px;top:334px;transform:scaleX(1.0463);color:#e6e6e6;font-weight:normal;font-style:normal">4</span><span class="t" style="left:797.82px;top:334px;transform:scaleX(1.0000);color:#e6e6e6;font-weight:normal;font-style:normal">1</span><span class="t" style="left:880.69px;top:334px;transform:scaleX(1.1420);color:#e6e6e6;font-weight:normal;font-style:normal">1291175</span><span class="t" style="left:1048.71px;top:334px;transform:scaleX(1.1266);color:#e6e6e6;font-weight:normal;font-style:normal">1313746</span><span class="t" style="left:1184.71px;top:334px;transform:scaleX(1.1266);color:#e6e6e6;font-weight:normal;font-style:normal">1313746</span><span class="t" style="left:1304.32px;top:334px;transform:scaleX(1.1278);color:#e6e6e6;font-weight:normal;font-style:normal">807254074</span><span class="t" style="left:1459.64px;top:334px;transform:scaleX(1.1299);color:#e6e6e6;font-weight:normal;font-style:normal">164083.2516</span><span class="t" style="left:17.08px;top:364px;transform:scaleX(1.0697);color:#ffffff;font-weight:normal;font-style:normal">12</span><span class="t" style="left:89.81px;top:364px;transform:scaleX(1.0175);color:#a9a9a9;font-weight:normal;font-style:italic">NA</span><span class="t" style="left:124.73px;top:364px;transform:scaleX(1.0175);color:#a9a9a9;font-weight:normal;font-style:italic">NA</span><span class="t" style="left:192.53px;top:364px;transform:scaleX(1.1357);color:#e6e6e6;font-weight:normal;font-style:normal">25 to under 55</span><span class="t" style="left:312.73px;top:364px;transform:scaleX(1.0175);color:#a9a9a9;font-weight:normal;font-style:italic">NA</span><span class="t" style="left:451.29px;top:364px;transform:scaleX(1.0986);color:#e6e6e6;font-weight:normal;font-style:normal">age</span><span class="t" style="left:703.69px;top:364px;transform:scaleX(1.0463);color:#e6e6e6;font-weight:normal;font-style:normal">4</span><span class="t" style="left:797.82px;top:364px;transform:scaleX(1.0000);color:#e6e6e6;font-weight:normal;font-style:normal">1</span><span class="t" style="left:880.71px;top:364px;transform:scaleX(1.1249);color:#e6e6e6;font-weight:normal;font-style:normal">1828488</span><span class="t" style="left:1048.71px;top:364px;transform:scaleX(1.1256);color:#e6e6e6;font-weight:normal;font-style:normal">1860279</span><span class="t" style="left:1184.71px;top:364px;transform:scaleX(1.1256);color:#e6e6e6;font-weight:normal;font-style:normal">1860279</span><span class="t" style="left:1295.21px;top:364px;transform:scaleX(1.1421);color:#e6e6e6;font-weight:normal;font-style:normal">1142574613</span><span class="t" style="left:1459.54px;top:364px;transform:scaleX(1.1295);color:#e6e6e6;font-weight:normal;font-style:normal">232795.2784</span><span class="t" style="left:17.07px;top:394px;transform:scaleX(1.0832);color:#ffffff;font-weight:normal;font-style:normal">13</span><span class="t" style="left:89.81px;top:394px;transform:scaleX(1.0175);color:#a9a9a9;font-weight:normal;font-style:italic">NA</span><span class="t" style="left:124.73px;top:394px;transform:scaleX(1.0175);color:#a9a9a9;font-weight:normal;font-style:italic">NA</span><span class="t" style="left:192.75px;top:394px;transform:scaleX(1.1333);color:#e6e6e6;font-weight:normal;font-style:normal">55 to under 65</span><span class="t" style="left:312.73px;top:394px;transform:scaleX(1.0175);color:#a9a9a9;font-weight:normal;font-style:italic">NA</span><span class="t" style="left:451.29px;top:394px;transform:scaleX(1.0986);color:#e6e6e6;font-weight:normal;font-style:normal">age</span><span class="t" style="left:703.69px;top:394px;transform:scaleX(1.0463);color:#e6e6e6;font-weight:normal;font-style:normal">4</span><span class="t" style="left:797.82px;top:394px;transform:scaleX(1.0000);color:#e6e6e6;font-weight:normal;font-style:normal">1</span><span class="t" style="left:889.81px;top:394px;transform:scaleX(1.1211);color:#e6e6e6;font-weight:normal;font-style:normal">836803</span><span class="t" style="left:17.06px;top:424px;transform:scaleX(1.0907);color:#ffffff;font-weight:normal;font-style:normal">14</span><span class="t" style="left:89.81px;top:424px;transform:scaleX(1.0175);color:#a9a9a9;font-weight:normal;font-style:italic">NA</span><span class="t" style="left:124.73px;top:424px;transform:scaleX(1.0175);color:#a9a9a9;font-weight:normal;font-style:italic">NA</span><span class="t" style="left:192.47px;top:424px;transform:scaleX(1.1338);color:#e6e6e6;font-weight:normal;font-style:normal">65 and older</span><span class="t" style="left:312.73px;top:424px;transform:scaleX(1.0175);color:#a9a9a9;font-weight:normal;font-style:italic">NA</span><span class="t" style="left:451.29px;top:424px;transform:scaleX(1.0986);color:#e6e6e6;font-weight:normal;font-style:normal">age</span><span class="t" style="left:703.69px;top:424px;transform:scaleX(1.0463);color:#e6e6e6;font-weight:normal;font-style:normal">4</span><span class="t" style="left:797.82px;top:424px;transform:scaleX(1.0000);color:#e6e6e6;font-weight:normal;font-style:normal">1</span><span class="t" style="left:880.60px;top:424px;transform:scaleX(1.1245);color:#e6e6e6;font-weight:normal;font-style:normal">2932427</span><span class="t" style="left:17.08px;top:454px;transform:scaleX(1.0740);color:#ffffff;font-weight:normal;font-style:normal">15</span><span class="t" style="left:89.81px;top:454px;transform:scaleX(1.0175);color:#a9a9a9;font-weight:normal;font-style:italic">NA</span><span class="t" style="left:124.73px;top:454px;transform:scaleX(1.0175);color:#a9a9a9;font-weight:normal;font-style:italic">NA</span><span class="t" style="left:192.23px;top:454px;transform:scaleX(1.0175);color:#a9a9a9;font-weight:normal;font-style:italic">NA</span><span class="t" style="left:312.73px;top:454px;transform:scaleX(1.0175);color:#a9a9a9;font-weight:normal;font-style:italic">NA</span><span class="t" style="left:451.29px;top:454px;transform:scaleX(1.0986);color:#e6e6e6;font-weight:normal;font-style:normal">age</span><span class="t" style="left:703.69px;top:454px;transform:scaleX(1.0463);color:#e6e6e6;font-weight:normal;font-style:normal">4</span><span class="t" style="left:797.82px;top:454px;transform:scaleX(1.0000);color:#e6e6e6;font-weight:normal;font-style:normal">1</span><span class="t" style="left:935.70px;top:454px;transform:scaleX(1.0471);color:#e6e6e6;font-weight:normal;font-style:normal">0</span><span class="t" style="left:17.05px;top:484px;transform:scaleX(1.1002);color:#ffffff;font-weight:normal;font-style:normal">16</span><span class="t" style="left:89.81px;top:484px;transform:scaleX(1.0175);color:#a9a9a9;font-weight:normal;font-style:italic">NA</span><span class="t" style="left:124.73px;top:484px;transform:scaleX(1.0175);color:#a9a9a9;font-weight:normal;font-style:italic">NA</span><span class="t" style="left:192.23px;top:484px;transform:scaleX(1.0175);color:#a9a9a9;font-weight:normal;font-style:italic">NA</span><span class="t" style="left:312.41px;top:484px;transform:scaleX(1.1021);color:#e6e6e6;font-weight:normal;font-style:normal">Total</span><span class="t" style="left:451.20px;top:484px;transform:scaleX(1.1321);color:#e6e6e6;font-weight:normal;font-style:normal">education</span><span class="t" style="left:703.87px;top:484px;transform:scaleX(0.9889);color:#e6e6e6;font-weight:normal;font-style:normal">5</span><span class="t" style="left:797.82px;top:484px;transform:scaleX(1.0000);color:#e6e6e6;font-weight:normal;font-style:normal">1</span><span class="t" style="left:880.51px;top:484px;transform:scaleX(1.1241);color:#e6e6e6;font-weight:normal;font-style:normal">9153171</span><span class="t" style="left:17.07px;top:514px;transform:scaleX(1.0848);color:#ffffff;font-weight:normal;font-style:normal">17</span><span class="t" style="left:89.81px;top:514px;transform:scaleX(1.0175);color:#a9a9a9;font-weight:normal;font-style:italic">NA</span><span class="t" style="left:124.73px;top:514px;transform:scaleX(1.0175);color:#a9a9a9;font-weight:normal;font-style:italic">NA</span><span class="t" style="left:192.23px;top:514px;transform:scaleX(1.0175);color:#a9a9a9;font-weight:normal;font-style:italic">NA</span><span class="t" style="left:313.06px;top:514px;transform:scaleX(1.1302);color:#e6e6e6;font-weight:normal;font-style:normal">low education</span><span class="t" style="left:451.20px;top:514px;transform:scaleX(1.1321);color:#e6e6e6;font-weight:normal;font-style:normal">education</span><span class="t" style="left:703.87px;top:514px;transform:scaleX(0.9889);color:#e6e6e6;font-weight:normal;font-style:normal">5</span><span class="t" style="left:797.82px;top:514px;transform:scaleX(1.0000);color:#e6e6e6;font-weight:normal;font-style:normal">1</span><span class="t" style="left:880.84px;top:514px;transform:scaleX(1.1202);color:#e6e6e6;font-weight:normal;font-style:normal">3050597</span><span class="t" style="left:17.05px;top:544px;transform:scaleX(1.0941);color:#ffffff;font-weight:normal;font-style:normal">18</span><span class="t" style="left:89.81px;top:544px;transform:scaleX(1.0175);color:#a9a9a9;font-weight:normal;font-style:italic">NA</span><span class="t" style="left:124.73px;top:544px;transform:scaleX(1.0175);color:#a9a9a9;font-weight:normal;font-style:italic">NA</span><span class="t" style="left:192.23px;top:544px;transform:scaleX(1.0175);color:#a9a9a9;font-weight:normal;font-style:italic">NA</span><span class="t" style="left:313.02px;top:544px;transform:scaleX(1.1388);color:#e6e6e6;font-weight:normal;font-style:normal">middle education</span><span class="t" style="left:451.20px;top:544px;transform:scaleX(1.1321);color:#e6e6e6;font-weight:normal;font-style:normal">education</span><span class="t" style="left:703.87px;top:544px;transform:scaleX(0.9889);color:#e6e6e6;font-weight:normal;font-style:normal">5</span><span class="t" style="left:797.82px;top:544px;transform:scaleX(1.0000);color:#e6e6e6;font-weight:normal;font-style:normal">1</span><span class="t" style="left:880.84px;top:544px;transform:scaleX(1.1242);color:#e6e6e6;font-weight:normal;font-style:normal">3052256</span><span class="t" style="left:17.05px;top:573px;transform:scaleX(1.0965);color:#ffffff;font-weight:normal;font-style:normal">19</span><span class="t" style="left:89.81px;top:573px;transform:scaleX(1.0175);color:#a9a9a9;font-weight:normal;font-style:italic">NA</span><span class="t" style="left:124.73px;top:573px;transform:scaleX(1.0175);color:#a9a9a9;font-weight:normal;font-style:italic">NA</span><span class="t" style="left:192.23px;top:573px;transform:scaleX(1.0175);color:#a9a9a9;font-weight:normal;font-style:italic">NA</span><span class="t" style="left:312.97px;top:573px;transform:scaleX(1.1354);color:#e6e6e6;font-weight:normal;font-style:normal">high education</span><span class="t" style="left:451.20px;top:573px;transform:scaleX(1.1321);color:#e6e6e6;font-weight:normal;font-style:normal">education</span><span class="t" style="left:703.87px;top:573px;transform:scaleX(0.9889);color:#e6e6e6;font-weight:normal;font-style:normal">5</span><span class="t" style="left:797.82px;top:573px;transform:scaleX(1.0000);color:#e6e6e6;font-weight:normal;font-style:normal">1</span><span class="t" style="left:880.84px;top:573px;transform:scaleX(1.1226);color:#e6e6e6;font-weight:normal;font-style:normal">3050318</span><span class="t" style="left:16.93px;top:603px;transform:scaleX(1.0999);color:#ffffff;font-weight:normal;font-style:normal">20</span><span class="t" style="left:89.81px;top:603px;transform:scaleX(1.0175);color:#a9a9a9;font-weight:normal;font-style:italic">NA</span><span class="t" style="left:124.73px;top:603px;transform:scaleX(1.0175);color:#a9a9a9;font-weight:normal;font-style:italic">NA</span><span class="t" style="left:192.23px;top:603px;transform:scaleX(1.0175);color:#a9a9a9;font-weight:normal;font-style:italic">NA</span><span class="t" style="left:312.73px;top:603px;transform:scaleX(1.0175);color:#a9a9a9;font-weight:normal;font-style:italic">NA</span><span class="t" style="left:451.20px;top:603px;transform:scaleX(1.1321);color:#e6e6e6;font-weight:normal;font-style:normal">education</span><span class="t" style="left:703.87px;top:603px;transform:scaleX(0.9889);color:#e6e6e6;font-weight:normal;font-style:normal">5</span><span class="t" style="left:797.82px;top:603px;transform:scaleX(1.0000);color:#e6e6e6;font-weight:normal;font-style:normal">1</span><span class="t" style="left:889.86px;top:603px;transform:scaleX(1.1252);color:#e6e6e6;font-weight:normal;font-style:normal">454926</span><span class="t" style="left:16.94px;top:633px;transform:scaleX(1.0853);color:#ffffff;font-weight:normal;font-style:normal">21</span><span class="t" style="left:74.10px;top:633px;transform:scaleX(1.1153);color:#e6e6e6;font-weight:normal;font-style:normal">2023</span><span class="t" style="left:124.41px;top:633px;transform:scaleX(1.1021);color:#e6e6e6;font-weight:normal;font-style:normal">Total</span><span class="t" style="left:192.23px;top:633px;transform:scaleX(1.0175);color:#a9a9a9;font-weight:normal;font-style:italic">NA</span><span class="t" style="left:312.73px;top:633px;transform:scaleX(1.0175);color:#a9a9a9;font-weight:normal;font-style:italic">NA</span><span class="t" style="left:451.48px;top:633px;transform:scaleX(1.1507);color:#e6e6e6;font-weight:normal;font-style:normal">year+sex</span><span class="t" style="left:703.54px;top:633px;transform:scaleX(1.0836);color:#e6e6e6;font-weight:normal;font-style:normal">6</span><span class="t" style="left:797.66px;top:633px;transform:scaleX(1.0083);color:#e6e6e6;font-weight:normal;font-style:normal">2</span><span class="t" style="left:880.84px;top:633px;transform:scaleX(1.1232);color:#e6e6e6;font-weight:normal;font-style:normal">3287019</span><span class="t" style="left:16.95px;top:663px;transform:scaleX(1.0785);color:#ffffff;font-weight:normal;font-style:normal">22</span><span class="t" style="left:74.10px;top:663px;transform:scaleX(1.1153);color:#e6e6e6;font-weight:normal;font-style:normal">2023</span><span class="t" style="left:124.93px;top:663px;transform:scaleX(1.0787);color:#e6e6e6;font-weight:normal;font-style:normal">Male</span><span class="t" style="left:192.23px;top:663px;transform:scaleX(1.0175);color:#a9a9a9;font-weight:normal;font-style:italic">NA</span><span class="t" style="left:312.73px;top:663px;transform:scaleX(1.0175);color:#a9a9a9;font-weight:normal;font-style:italic">NA</span><span class="t" style="left:451.48px;top:663px;transform:scaleX(1.1507);color:#e6e6e6;font-weight:normal;font-style:normal">year+sex</span><span class="t" style="left:703.54px;top:663px;transform:scaleX(1.0836);color:#e6e6e6;font-weight:normal;font-style:normal">6</span><span class="t" style="left:797.66px;top:663px;transform:scaleX(1.0083);color:#e6e6e6;font-weight:normal;font-style:normal">2</span><span class="t" style="left:880.69px;top:663px;transform:scaleX(1.1420);color:#e6e6e6;font-weight:normal;font-style:normal">1643115</span><span class="t" style="left:16.94px;top:693px;transform:scaleX(1.0916);color:#ffffff;font-weight:normal;font-style:normal">23</span><span class="t" style="left:74.10px;top:693px;transform:scaleX(1.1153);color:#e6e6e6;font-weight:normal;font-style:normal">2023</span><span class="t" style="left:124.94px;top:693px;transform:scaleX(1.0727);color:#e6e6e6;font-weight:normal;font-style:normal">Female</span><span class="t" style="left:192.23px;top:693px;transform:scaleX(1.0175);color:#a9a9a9;font-weight:normal;font-style:italic">NA</span><span class="t" style="left:312.73px;top:693px;transform:scaleX(1.0175);color:#a9a9a9;font-weight:normal;font-style:italic">NA</span><span class="t" style="left:451.48px;top:693px;transform:scaleX(1.1507);color:#e6e6e6;font-weight:normal;font-style:normal">year+sex</span><span class="t" style="left:703.54px;top:693px;transform:scaleX(1.0836);color:#e6e6e6;font-weight:normal;font-style:normal">6</span><span class="t" style="left:797.66px;top:693px;transform:scaleX(1.0083);color:#e6e6e6;font-weight:normal;font-style:normal">2</span><span class="t" style="left:880.71px;top:693px;transform:scaleX(1.1239);color:#e6e6e6;font-weight:normal;font-style:normal">1643904</span><span class="t" style="left:16.93px;top:723px;transform:scaleX(1.0989);color:#ffffff;font-weight:normal;font-style:normal">24</span><span class="t" style="left:74.10px;top:723px;transform:scaleX(1.1153);color:#e6e6e6;font-weight:normal;font-style:normal">2023</span><span class="t" style="left:124.73px;top:723px;transform:scaleX(1.0175);color:#a9a9a9;font-weight:normal;font-style:italic">NA</span><span class="t" style="left:192.23px;top:723px;transform:scaleX(1.0175);color:#a9a9a9;font-weight:normal;font-style:italic">NA</span><span class="t" style="left:312.73px;top:723px;transform:scaleX(1.0175);color:#a9a9a9;font-weight:normal;font-style:italic">NA</span><span class="t" style="left:451.48px;top:723px;transform:scaleX(1.1507);color:#e6e6e6;font-weight:normal;font-style:normal">year+sex</span><span class="t" style="left:703.54px;top:723px;transform:scaleX(1.0836);color:#e6e6e6;font-weight:normal;font-style:normal">6</span><span class="t" style="left:797.66px;top:723px;transform:scaleX(1.0083);color:#e6e6e6;font-weight:normal;font-style:normal">2</span><span class="t" style="left:899.04px;top:723px;transform:scaleX(1.1202);color:#e6e6e6;font-weight:normal;font-style:normal">74138</span><span class="t" style="left:16.94px;top:753px;transform:scaleX(1.0827);color:#ffffff;font-weight:normal;font-style:normal">25</span><span class="t" style="left:74.09px;top:753px;transform:scaleX(1.1186);color:#e6e6e6;font-weight:normal;font-style:normal">2024</span><span class="t" style="left:124.41px;top:753px;transform:scaleX(1.1021);color:#e6e6e6;font-weight:normal;font-style:normal">Total</span><span class="t" style="left:192.23px;top:753px;transform:scaleX(1.0175);color:#a9a9a9;font-weight:normal;font-style:italic">NA</span><span class="t" style="left:312.73px;top:753px;transform:scaleX(1.0175);color:#a9a9a9;font-weight:normal;font-style:italic">NA</span><span class="t" style="left:451.48px;top:753px;transform:scaleX(1.1507);color:#e6e6e6;font-weight:normal;font-style:normal">year+sex</span><span class="t" style="left:703.54px;top:753px;transform:scaleX(1.0836);color:#e6e6e6;font-weight:normal;font-style:normal">6</span><span class="t" style="left:797.66px;top:753px;transform:scaleX(1.0083);color:#e6e6e6;font-weight:normal;font-style:normal">2</span><span class="t" style="left:880.84px;top:753px;transform:scaleX(1.1242);color:#e6e6e6;font-weight:normal;font-style:normal">3287776</span><span class="t" style="left:16.92px;top:783px;transform:scaleX(1.1082);color:#ffffff;font-weight:normal;font-style:normal">26</span><span class="t" style="left:74.09px;top:783px;transform:scaleX(1.1186);color:#e6e6e6;font-weight:normal;font-style:normal">2024</span><span class="t" style="left:124.93px;top:783px;transform:scaleX(1.0787);color:#e6e6e6;font-weight:normal;font-style:normal">Male</span><span class="t" style="left:192.23px;top:783px;transform:scaleX(1.0175);color:#a9a9a9;font-weight:normal;font-style:italic">NA</span><span class="t" style="left:312.73px;top:783px;transform:scaleX(1.0175);color:#a9a9a9;font-weight:normal;font-style:italic">NA</span><span class="t" style="left:451.48px;top:783px;transform:scaleX(1.1507);color:#e6e6e6;font-weight:normal;font-style:normal">year+sex</span><span class="t" style="left:703.54px;top:783px;transform:scaleX(1.0836);color:#e6e6e6;font-weight:normal;font-style:normal">6</span><span class="t" style="left:797.66px;top:783px;transform:scaleX(1.0083);color:#e6e6e6;font-weight:normal;font-style:normal">2</span><span class="t" style="left:880.71px;top:783px;transform:scaleX(1.1256);color:#e6e6e6;font-weight:normal;font-style:normal">1644179</span><span class="t" style="left:16.94px;top:813px;transform:scaleX(1.0932);color:#ffffff;font-weight:normal;font-style:normal">27</span><span class="t" style="left:74.09px;top:813px;transform:scaleX(1.1186);color:#e6e6e6;font-weight:normal;font-style:normal">2024</span><span class="t" style="left:124.94px;top:813px;transform:scaleX(1.0727);color:#e6e6e6;font-weight:normal;font-style:normal">Female</span><span class="t" style="left:192.23px;top:813px;transform:scaleX(1.0175);color:#a9a9a9;font-weight:normal;font-style:italic">NA</span><span class="t" style="left:312.73px;top:813px;transform:scaleX(1.0175);color:#a9a9a9;font-weight:normal;font-style:italic">NA</span><span class="t" style="left:451.48px;top:813px;transform:scaleX(1.1507);color:#e6e6e6;font-weight:normal;font-style:normal">year+sex</span><span class="t" style="left:703.54px;top:813px;transform:scaleX(1.0836);color:#e6e6e6;font-weight:normal;font-style:normal">6</span><span class="t" style="left:797.66px;top:813px;transform:scaleX(1.0083);color:#e6e6e6;font-weight:normal;font-style:normal">2</span><span class="t" style="left:880.71px;top:813px;transform:scaleX(1.1225);color:#e6e6e6;font-weight:normal;font-style:normal">1643597</span><span class="t" style="left:16.93px;top:842px;transform:scaleX(1.1023);color:#ffffff;font-weight:normal;font-style:normal">28</span><span class="t" style="left:74.09px;top:842px;transform:scaleX(1.1186);color:#e6e6e6;font-weight:normal;font-style:normal">2024</span><span class="t" style="left:124.73px;top:842px;transform:scaleX(1.0175);color:#a9a9a9;font-weight:normal;font-style:italic">NA</span><span class="t" style="left:192.23px;top:842px;transform:scaleX(1.0175);color:#a9a9a9;font-weight:normal;font-style:italic">NA</span><span class="t" style="left:312.73px;top:842px;transform:scaleX(1.0175);color:#a9a9a9;font-weight:normal;font-style:italic">NA</span><span class="t" style="left:451.48px;top:842px;transform:scaleX(1.1507);color:#e6e6e6;font-weight:normal;font-style:normal">year+sex</span><span class="t" style="left:703.54px;top:842px;transform:scaleX(1.0836);color:#e6e6e6;font-weight:normal;font-style:normal">6</span><span class="t" style="left:797.66px;top:842px;transform:scaleX(1.0083);color:#e6e6e6;font-weight:normal;font-style:normal">2</span><span class="t" style="left:899.04px;top:842px;transform:scaleX(1.1225);color:#e6e6e6;font-weight:normal;font-style:normal">74026</span>
<div id="ov"></div><div id="fr"></div><div id="in"></div>
<pre id="con"> > Executing merge:
   + total

 > Executing combination merge:
   + year
   + sex
   + age
   + education
   + year + sex
   + year + age
   + year + education
   + sex + age
   + sex + education
   + age + education
   + year + sex + age
   + year + sex + education
   + year + age + education
   + sex + age + education
   + year + sex + age + education

 > Putting results together.

- - - 'summarise_plus' execution time: 0.596 seconds</pre>
</body></html>
